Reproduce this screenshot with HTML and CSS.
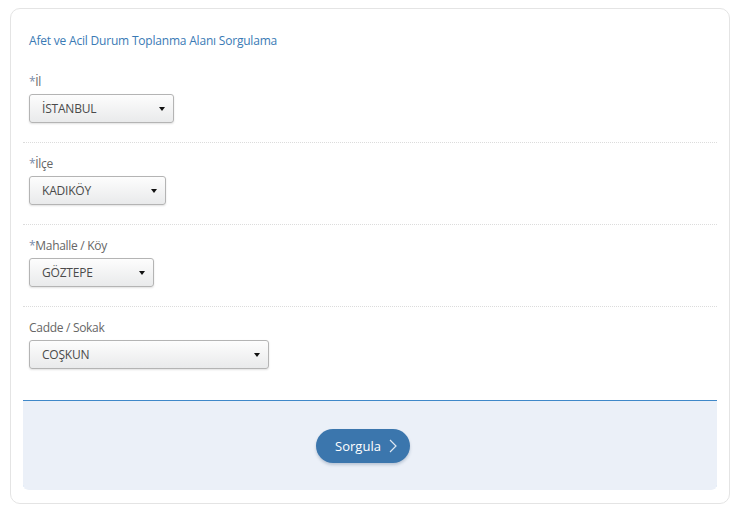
FILE: index.html
```html
<!DOCTYPE html>
<html lang="tr">
<head>
<meta charset="utf-8">
<title>Afet ve Acil Durum Toplanma Alanı Sorgulama</title>
<link rel="stylesheet" href="styles.css">
</head>
<body>
<div class="card">
  <div class="title">Afet ve Acil Durum Toplanma Alanı Sorgulama</div>
  <div class="group">
    <div class="label"><span class="req">*</span>İl</div>
    <div class="select w1"><span>İSTANBUL</span><i class="caret"></i></div>
  </div>
  <div class="group">
    <div class="label"><span class="req">*</span>İlçe</div>
    <div class="select w2"><span>KADIKÖY</span><i class="caret"></i></div>
  </div>
  <div class="group">
    <div class="label"><span class="req">*</span>Mahalle / Köy</div>
    <div class="select w3"><span>GÖZTEPE</span><i class="caret"></i></div>
  </div>
  <div class="group last">
    <div class="label">Cadde / Sokak</div>
    <div class="select w4"><span>COŞKUN</span><i class="caret"></i></div>
  </div>
  <div class="footer">
    <button class="btn">Sorgula
      <svg class="chev" width="8" height="14" viewBox="0 0 8 14"><path d="M1 1 L7 7 L1 13" fill="none" stroke="#dfe8f2" stroke-width="1.2"/></svg>
    </button>
  </div>
</div>
</body>
</html>
```
FILE: styles.css
```css
* { box-sizing: border-box; }
body {
  margin: 0;
  background: #fff;
  font-family: "Open Sans", "Noto Sans", sans-serif;
  font-size: 12px;
  color: #666;
}
.card {
  margin: 8px 0 0 10px;
  width: 720px;
  height: 496px;
  border: 1px solid #e4e4e4;
  border-radius: 10px;
  padding: 0 12px;
}
.title {
  color: #3a7ab5;
  font-size: 12px;
  line-height: 17px;
  padding: 23px 6px 12px;
  letter-spacing: -0.2px;
}
.group {
  padding: 12px 6px 19px;
  border-bottom: 1px dotted #dcdcdc;
}
.group.last {
  border-bottom: none;
  padding-bottom: 31px;
}
.label {
  line-height: 17px;
  margin-bottom: 4px;
  color: #666;
  letter-spacing: -0.3px;
}
.req { color: #7a8eab; }
.select {
  height: 29px;
  border: 1px solid #b4b4b4;
  border-radius: 3px;
  background: linear-gradient(#fdfdfd, #e9eaeb);
  box-shadow: 0 1px 2px rgba(0,0,0,0.12);
  display: flex;
  align-items: center;
  justify-content: space-between;
  padding: 0 8px 0 12px;
  color: #4a4a4a;
  letter-spacing: -0.2px;
}
.w1 { width: 145px; }
.w2 { width: 137px; }
.w3 { width: 125px; }
.w4 { width: 240px; }
.caret {
  width: 0;
  height: 0;
  border-left: 3.5px solid transparent;
  border-right: 3.5px solid transparent;
  border-top: 4px solid #111;
}
.footer {
  box-shadow: inset 0 1px 0 #3f88c9;
  background: #ebf0f8;
  border-radius: 0 0 6px 6px;
  height: 90px;
  display: flex;
  justify-content: center;
  align-items: center;
  padding: 1px 14px 0 0;
}
.btn {
  width: 94px;
  height: 34px;
  border: none;
  border-radius: 17px;
  background: #3b76ad;
  color: #fff;
  font-family: "Open Sans", "Noto Sans", sans-serif;
  font-size: 13px;
  display: flex;
  align-items: center;
  justify-content: center;
  gap: 8px;
  padding: 0 0 0 6px;
  box-shadow: 0 2px 3px rgba(40,70,110,0.25);
}
.chev { display: block; }
```
